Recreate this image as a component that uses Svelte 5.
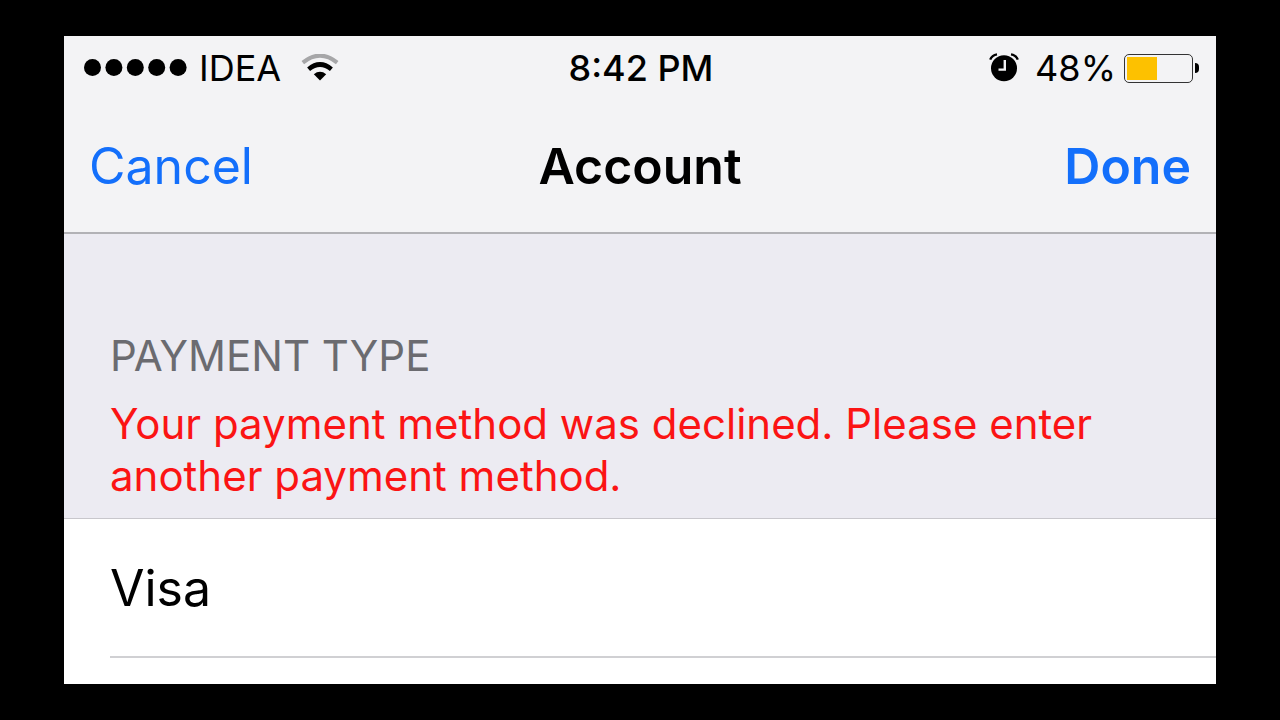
<script lang="ts">
	const carrier = 'IDEA';
	const battery = 48;
	const methods = ['Visa'];
</script>

<div class="phone">
	<header>
		<div class="status">
			<div class="status-left">
				<svg class="signal" width="104" height="20" viewBox="0 0 104 20" aria-hidden="true">
					{#each [0, 1, 2, 3, 4] as dot}
						<circle cx={9.5 + dot * 21.4} cy="9.5" r="8.5" />
					{/each}
				</svg>
				<span>{carrier}</span>
				<svg class="wifi" width="38" height="28" viewBox="0 0 38 28" aria-hidden="true">
					<path d="M1.8 8.6Q19-5.4 36.2 8.6" fill="none" stroke="#a6a6a8" stroke-width="4" />
					<path d="M7.6 15.2Q19 5.8 30.4 15.2" fill="none" stroke="#000" stroke-width="4.6" />
					<path d="M12.8 20.2Q19 15.4 25.2 20.2L19 26.6Z" />
				</svg>
			</div>
			<time>8:42 PM</time>
			<div class="status-right">
				<svg class="alarm" width="30" height="30" viewBox="0 0 30 30" aria-hidden="true">
					<circle cx="15" cy="15.2" r="13" />
					<path d="M1.2 6.6Q3 2.2 8 1.4M28.8 6.6Q27 2.2 22 1.4" fill="none" stroke="#000" stroke-width="2.4" />
					<path d="M15.8 7V16.6H9.5" fill="none" stroke="#f3f3f5" stroke-width="2.4" />
				</svg>
				<span>{battery}%</span>
				<div class="battery">
					<div class="cell"><div class="charge" style="width:{battery}%"></div></div>
					<div class="tip"></div>
				</div>
			</div>
		</div>
		<nav>
			<button class="cancel">Cancel</button>
			<h1>Account</h1>
			<button class="done">Done</button>
		</nav>
	</header>
	<section>
		<h2>PAYMENT TYPE</h2>
		<p>Your payment method was declined. Please enter another payment method.</p>
	</section>
	<ul>
		{#each methods as method}
			<li><button class="method">{method}</button></li>
		{/each}
	</ul>
</div>

<style>
	:global(body) {
		background: #000;
	}
	.phone {
		display: flex;
		flex-direction: column;
		box-sizing: border-box;
		min-height: calc(100vh - 72px);
		margin: 36px 64px;
		background: #fff;
		color: #000;
		font-family: Inter, 'Liberation Sans', sans-serif;
	}
	header {
		background: #f3f3f5;
		border-bottom: 2px solid #b2b2b6;
	}
	.status,
	nav {
		display: grid;
		grid-template-columns: 1fr auto 1fr;
		align-items: center;
	}
	.status {
		height: 64px;
		padding: 0 17px 0 19px;
		font-size: 36px;
		line-height: 44px;
	}
	.status-left,
	.status-right {
		display: flex;
		align-items: center;
	}
	.status-left {
		gap: 12px;
	}
	.wifi {
		margin-left: 8px;
	}
	.status-right {
		justify-content: flex-end;
		gap: 8px;
	}
	.alarm {
		margin-right: 8px;
	}
	time {
		font-weight: 500;
	}
	.battery {
		display: flex;
		align-items: center;
		gap: 2px;
	}
	.cell {
		box-sizing: border-box;
		width: 69px;
		height: 29px;
		padding: 2px;
		border: 1px solid #333;
		border-radius: 5px;
	}
	.charge {
		height: 100%;
		background: #fdc100;
	}
	.tip {
		width: 4px;
		height: 10px;
		border-radius: 0 4px 4px 0;
		background: #000;
	}
	nav {
		height: 132px;
		padding: 0 25px;
	}
	button {
		padding: 0;
		border: 0;
		background: none;
		color: #136ffb;
		font: inherit;
		font-size: 50px;
		line-height: 60px;
		cursor: pointer;
	}
	.cancel {
		justify-self: start;
	}
	.done {
		justify-self: end;
		font-weight: 600;
	}
	h1 {
		margin: 0;
		font-size: 50px;
		font-weight: 600;
		line-height: 60px;
	}
	section {
		padding: 96px 46px 16px;
		background: #ecebf2;
		border-bottom: 1px solid #c8c7cc;
	}
	h2,
	p {
		margin: 0;
		font-size: 42px;
		font-weight: 400;
		line-height: 52px;
	}
	h2 {
		margin-bottom: 16px;
		color: #6b6b70;
	}
	p {
		color: #fb1414;
	}
	ul {
		margin: 0;
		padding: 0 0 0 46px;
		list-style: none;
	}
	li {
		border-bottom: 2px solid #d0d0d3;
	}
	.method {
		display: block;
		width: 100%;
		height: 137px;
		color: #000;
		text-align: left;
	}
</style>
